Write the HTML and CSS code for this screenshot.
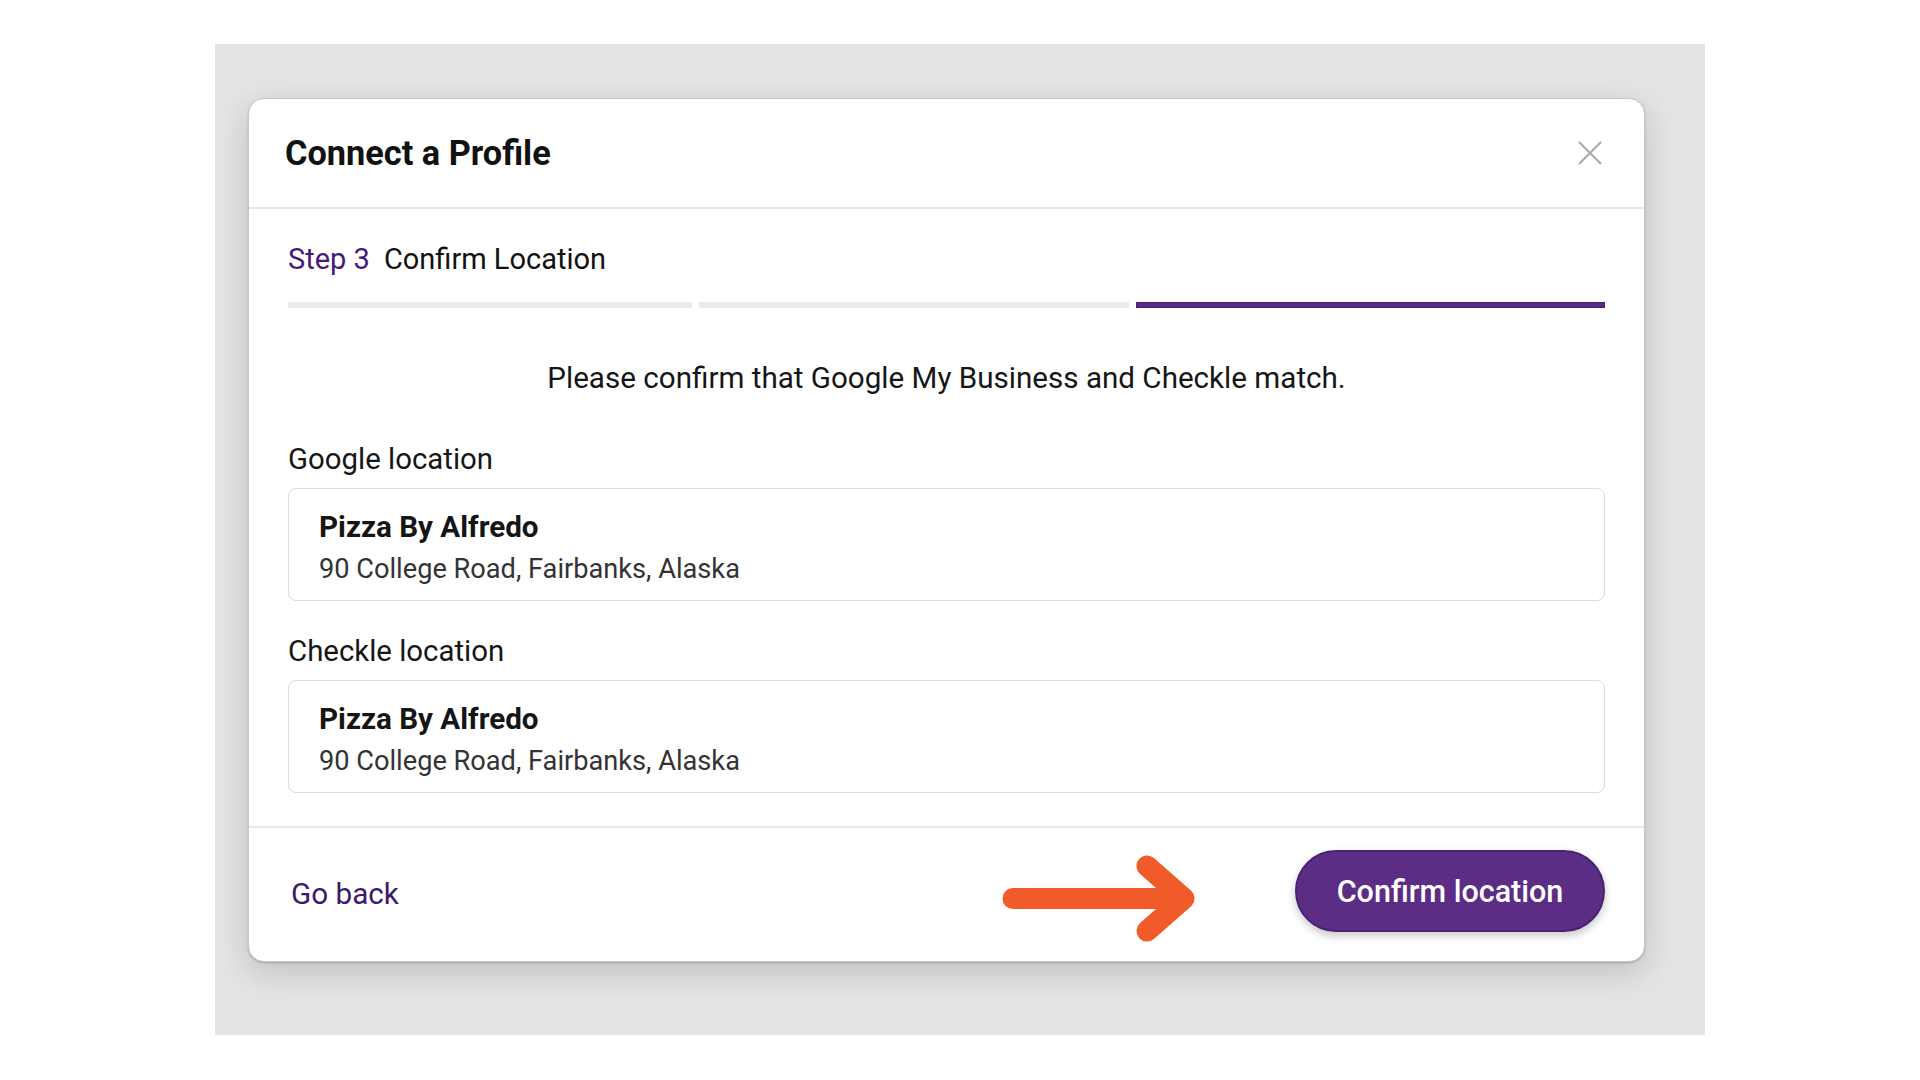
FILE: index.html
```html
<!DOCTYPE html>
<html lang="en">
<head>
  <meta charset="UTF-8">
  <meta name="viewport" content="width=device-width, initial-scale=1.0">
  <title>Connect a Profile</title>
  <link rel="stylesheet" href="styles.css">
</head>
<body>
  <div class="backdrop">
    <div class="modal">
      <div class="modal-header">
        <h2 class="modal-title">Connect a Profile</h2>
        <button class="close-btn" aria-label="Close">
          <svg width="24" height="24" viewBox="0 0 24 24">
            <path d="M1 1 L23 23 M23 1 L1 23" stroke="#a9a9a9" stroke-width="2" fill="none"/>
          </svg>
        </button>
      </div>

      <div class="modal-body">
        <div class="step-row">
          <span class="step-num">Step 3</span>
          <span class="step-name">Confirm Location</span>
        </div>
        <div class="progress">
          <div class="progress-bar"></div>
          <div class="progress-bar"></div>
          <div class="progress-bar active"></div>
        </div>

        <p class="intro">Please confirm that Google My Business and Checkle match.</p>

        <div class="loc-label">Google location</div>
        <div class="loc-card">
          <div class="loc-name">Pizza By Alfredo</div>
          <div class="loc-address">90 College Road, Fairbanks, Alaska</div>
        </div>

        <div class="loc-label second">Checkle location</div>
        <div class="loc-card">
          <div class="loc-name">Pizza By Alfredo</div>
          <div class="loc-address">90 College Road, Fairbanks, Alaska</div>
        </div>
      </div>

      <div class="modal-footer">
        <a class="back-link" href="#">Go back</a>
        <div class="footer-actions">
          <!-- hint arrow pointing at the primary action -->
          <svg class="hint-arrow" width="200" height="82" viewBox="0 0 200 82">
            <g stroke="#f15a29" stroke-width="21" stroke-linecap="round" stroke-linejoin="round" fill="none">
              <path d="M14 48.5 H184"/>
              <path d="M148 16 L185 48.5 L148 81"/>
            </g>
          </svg>
          <button class="confirm-btn">Confirm location</button>
        </div>
      </div>
    </div>
  </div>
</body>
</html>
```

FILE: styles.css
```css
* {
  box-sizing: border-box;
}
body {
  margin: 0;
  background: #fff;
  font-family: Roboto, "Noto Sans", sans-serif;
  color: #1a1a1a;
}
.backdrop {
  margin: 44px 0 0 215px;
  width: 1490px;
  height: 991px;
  padding: 54px 0 0 33px;
  background: #e4e4e4;
}
.modal {
  width: 1397px;
  background: #fff;
  border: 1px solid #c8c8c8;
  border-radius: 16px;
  box-shadow: 0 1px 2px rgba(0,0,0,0.2), 0 10px 32px rgba(0,0,0,0.16);
}
.modal-header {
  height: 110px;
  display: flex;
  align-items: center;
  justify-content: space-between;
  padding: 0 42px 0 36px;
  border-bottom: 2px solid #e8e8e8;
}
.modal-title {
  margin: 0;
  font-size: 34.3px;
  line-height: 40px;
  font-weight: 700;
  color: #111;
}
.close-btn {
  border: 0;
  padding: 0;
  background: none;
  width: 24px;
  height: 24px;
  cursor: pointer;
}
.close-btn svg {
  display: block;
}
.modal-body {
  padding: 32px 39px 33px;
}
.step-row {
  display: flex;
  gap: 14px;
  font-size: 29px;
  line-height: 36px;
}
.step-num {
  color: #44197a;
}
.step-name {
  color: #111;
}
.progress {
  display: grid;
  grid-template-columns: 404fr 429fr 469fr;
  gap: 7px;
  margin-top: 25px;
}
.progress-bar {
  height: 6px;
  background: #ebebeb;
}
.progress-bar.active {
  background: #5a2c83;
  box-shadow: inset 0 0 0 1px #43206a;
}
.intro {
  margin: 52px 0 0;
  text-align: center;
  font-size: 29.6px;
  line-height: 36px;
  color: #161616;
}
.loc-label {
  margin-top: 45px;
  font-size: 29.4px;
  line-height: 36px;
  color: #161616;
}
.loc-label.second {
  margin-top: 32px;
}
.loc-card {
  margin-top: 11px;
  border: 1px solid #dcdcdc;
  border-radius: 8px;
  padding: 20px 30px 13px;
}
.loc-name {
  font-size: 29.6px;
  line-height: 36px;
  font-weight: 700;
  color: #151515;
}
.loc-address {
  margin-top: 6px;
  font-size: 27.2px;
  line-height: 36px;
  color: #333;
}
.modal-footer {
  display: flex;
  align-items: center;
  justify-content: space-between;
  padding: 22px 39px 29px 42px;
  border-top: 2px solid #e8e8e8;
}
.back-link {
  padding-top: 6px;
  font-size: 29.7px;
  line-height: 36px;
  color: #3b1a6e;
  text-decoration: none;
}
.footer-actions {
  display: flex;
  align-items: center;
}
.hint-arrow {
  display: block;
  overflow: visible;
  margin-right: 96px;
}
.confirm-btn {
  width: 310px;
  height: 82px;
  border: 2px solid #4a2272;
  border-radius: 41px;
  background: #5b2d84;
  color: #fff;
  font-family: Roboto, "Noto Sans", sans-serif;
  font-size: 30.5px;
  font-weight: 500;
  box-shadow: 0 4px 8px rgba(0,0,0,0.22);
  cursor: pointer;
}
```
